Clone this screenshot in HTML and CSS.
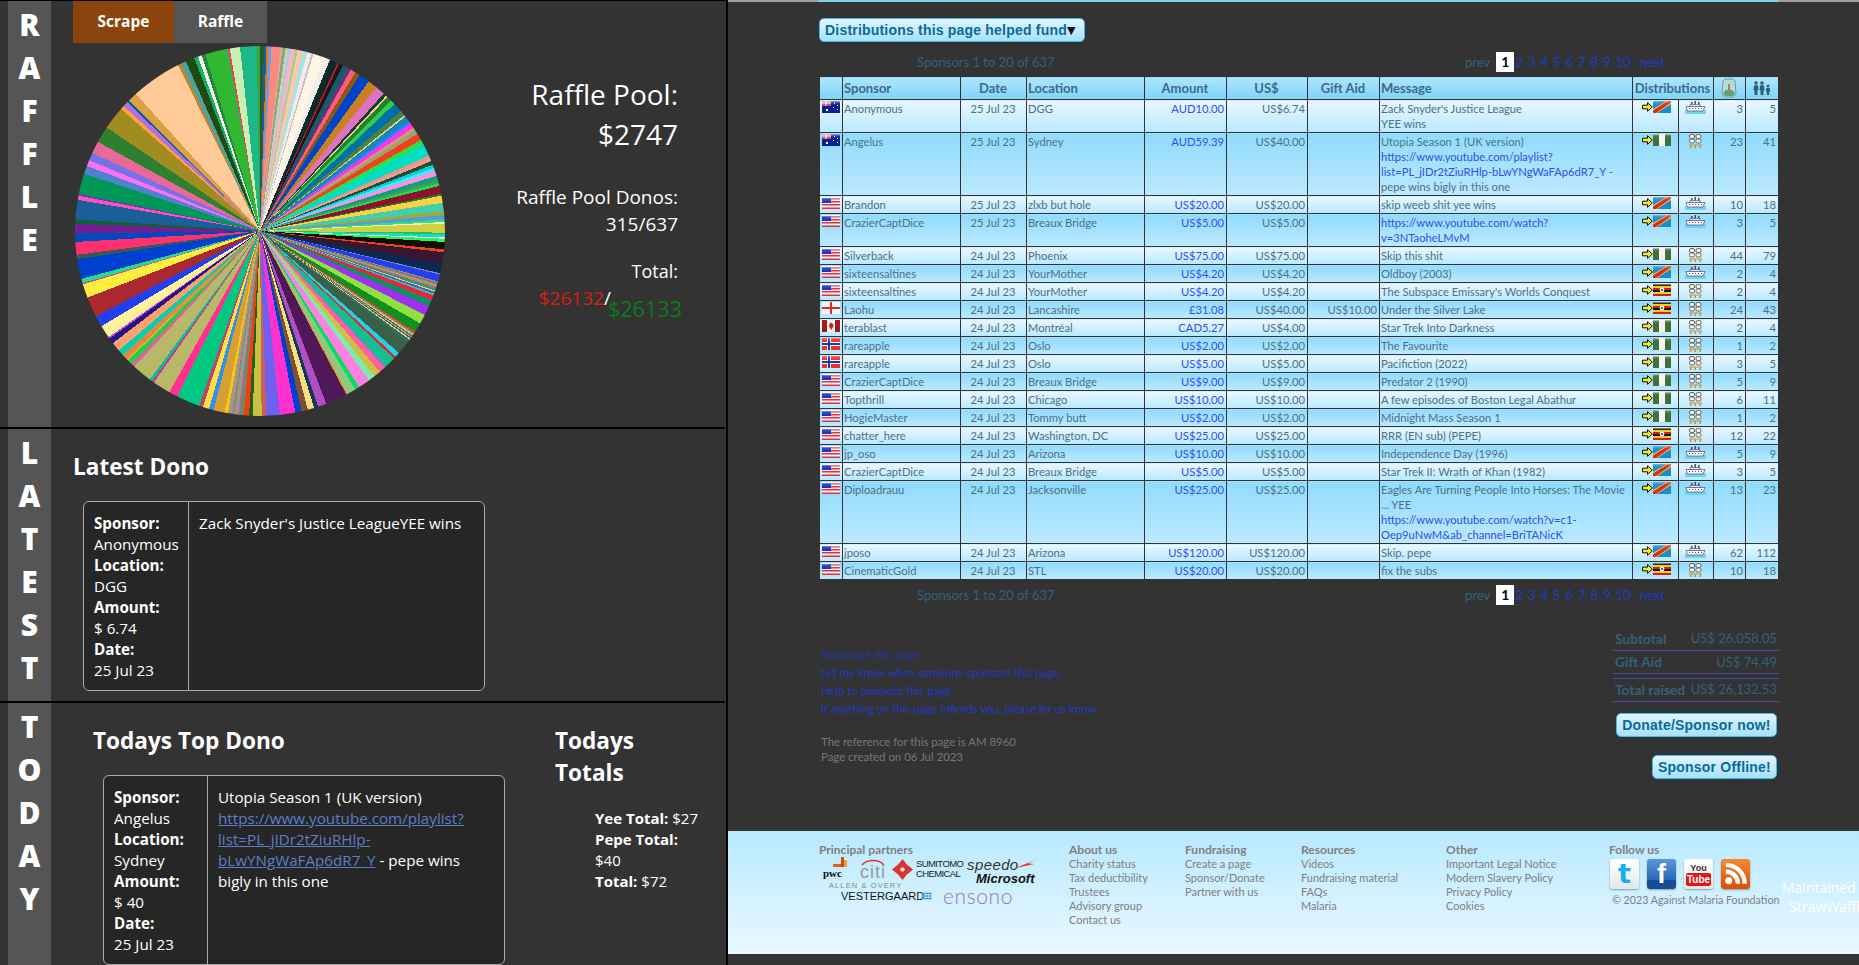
FILE: index.html
```html
<!DOCTYPE html>
<html lang="en">
<head>
<meta charset="utf-8">
<title>Raffle</title>
<link rel="stylesheet" href="styles.css">
</head>
<body>
<svg class="defs" aria-hidden="true">
  <defs>
    <linearGradient id="gloss" x1="0" y1="0" x2="0" y2="1"><stop offset="0" stop-color="#fff" stop-opacity=".65"/><stop offset=".45" stop-color="#fff" stop-opacity=".1"/><stop offset="1" stop-color="#fff" stop-opacity="0"/></linearGradient>
    <symbol id="us" viewBox="0 0 18 12"><rect width="18" height="12" fill="#f4f4f4"/><path d="M0 1h18v1.5H0zM0 4h18v1.5H0zM0 7h18v1.5H0zM0 10.5h18V12H0z" fill="#e03040"/><rect y="1" width="9" height="5" fill="#1a2fc0"/><rect width="18" height="6" fill="url(#gloss)"/></symbol>
    <symbol id="au" viewBox="0 0 18 12"><rect width="18" height="12" fill="#0a1f90"/><rect width="9" height="5" fill="#c84a70"/><path d="M0 2h9M4 0v5" stroke="#fff" stroke-width="1"/><path d="M12 2h1v1h-1zM15 4h1v1h-1zM11 6h1v1h-1zM15 8h1v1h-1zM4 8h2v2H4z" fill="#fff"/><rect width="18" height="5" fill="url(#gloss)"/></symbol>
    <symbol id="eng" viewBox="0 0 18 12"><rect width="18" height="12" fill="#f6f6f6"/><path d="M0 5h18v2H0zM8 0h2v12H8z" fill="#e02828"/></symbol>
    <symbol id="ca" viewBox="0 0 18 12"><rect width="18" height="12" fill="#f4f4f4"/><path d="M0 0h5v12H0zM13 0h5v12h-5z" fill="#a81818"/><path d="M9 2l1 2 1.500-.5-.5 2.500 1 .5-2 1.500v1.500H8.500V8l-2-1.500 1-.5-.5-2.500L8 4z" fill="#d01818"/></symbol>
    <symbol id="no" viewBox="0 0 18 12"><rect width="18" height="12" fill="#f03030"/><path d="M0 4h18v4H0zM5 0h4v12H5z" fill="#f4f4f4"/><path d="M0 5h18v2H0zM6 0h2v12H6z" fill="#1c3aa8"/><rect width="18" height="5" fill="url(#gloss)" opacity=".5"/></symbol>
    <symbol id="drc" viewBox="0 0 18 12"><rect width="18" height="12" fill="#1a8cd0"/><path d="M0 12V8L14 0h4v3L4 12z" fill="#f0d020"/><path d="M0 12V9.500L15 0h3v1.500L3 12z" fill="#e02820"/><rect width="18" height="5" fill="url(#gloss)" opacity=".6"/></symbol>
    <symbol id="ng" viewBox="0 0 18 12"><rect width="18" height="12" fill="#42703a"/><rect x="6" width="6" height="12" fill="#f4f4f0"/><rect width="18" height="4" fill="url(#gloss)"/></symbol>
    <symbol id="ug" viewBox="0 0 18 12"><rect width="18" height="12" fill="#111"/><path d="M0 2h18v2H0zM0 8h18v2H0z" fill="#f0d010"/><path d="M0 4h18v2H0zM0 10h18v2H0z" fill="#d81c1c"/><circle cx="9" cy="6" r="2.400" fill="#f4f4f4"/><circle cx="9" cy="6" r="1" fill="#333"/><rect width="18" height="3" fill="url(#gloss)"/></symbol>
    <symbol id="arrow" viewBox="0 0 11 10"><path d="M.5 3.200h5V.7L10.300 5 5.500 9.300V6.800h-5z" fill="#f4ec20" stroke="#111" stroke-width="1"/></symbol>
    <symbol id="ship" viewBox="0 0 21 13"><rect y="9" width="21" height="4" fill="#6fd4f4"/><path d="M1 5.500h19l-2 4.500H2.500z" fill="#fbfbff" stroke="#4a4a70" stroke-width=".7"/><path d="M5 3.500h10v2H5z" fill="#e8e8f4" stroke="#4a4a70" stroke-width=".6"/><path d="M6 1h1.500v2.500H6zM9.500 0H11v3.500H9.500zM13 1h1.500v2.500H13z" fill="#4a4a70"/><path d="M4 7.500h1M7 7.500h1M10 7.500h1M13 7.500h1M16 7.500h1" stroke="#4a4a70" stroke-width="1"/></symbol>
    <symbol id="pallet" viewBox="0 0 13 14"><g fill="#f2f2ea" stroke="#666660" stroke-width="1"><rect x=".5" y=".5" width="5" height="4" rx="1.500"/><rect x=".5" y="5" width="5" height="4" rx="1.500"/><rect x="7" y=".5" width="5" height="4" rx="1.500"/><rect x="7" y="5" width="5" height="4" rx="1.500"/></g><path d="M0 10.500h13v1H0z" fill="#c89030"/><path d="M1 11.500h1.500V14H1zM5.500 11.500H7V14H5.500zM10.500 11.500H12V14h-1.500z" fill="#c89030"/></symbol>
    <symbol id="jar" viewBox="0 0 16 20"><path d="M4 1h8l2 2 1 13-3 3H4l-3-3L2 3z" fill="#b8dcd4" stroke="#6f9a9c" stroke-width="1"/><path d="M2 15l3-3h6l3 3-2 3H4z" fill="#5f9f80"/><rect x="7" y="6" width="2" height="7" fill="#9a8a60"/></symbol>
    <symbol id="people" viewBox="0 0 18 14"><g fill="#2f6078"><circle cx="3" cy="2" r="1.800"/><path d="M1 4.300h4l.5 5H4.500V14h-3V9.300H.5z"/><circle cx="9" cy="2" r="1.800"/><path d="M7 4.300h4l.5 5h-1V14h-3V9.300h-1z"/><circle cx="15" cy="5" r="1.500"/><path d="M13.300 7h3.400l.5 3.500h-1V14h-2.400v-3.500h-1z"/></g></symbol>
  </defs>
</svg>

<div class="app">
  <aside class="left">
    <section class="panel panel-raffle">
      <div class="rail"><span>R</span><span>A</span><span>F</span><span>F</span><span>L</span><span>E</span></div>
      <div class="panel-body">
        <div class="tabs"><div class="tab tab-on">Scrape</div><div class="tab">Raffle</div></div>
        <div class="raffle-row">
          <div class="pie"></div>
          <div class="pool">
            <p class="pool-big">Raffle Pool:<br>$2747</p>
            <p class="pool-mid">Raffle Pool Donos:<br>315/637</p>
            <p class="pool-total">Total:</p>
            <p class="pool-money"><span class="red">$26132</span><span class="slash">/</span><span class="green">$26133</span></p>
          </div>
        </div>
      </div>
    </section>

    <section class="panel panel-latest">
      <div class="rail"><span>L</span><span>A</span><span>T</span><span>E</span><span>S</span><span>T</span></div>
      <div class="panel-body">
        <h2 class="dono-title">Latest Dono</h2>
        <div class="card">
          <div class="card-meta"><b>Sponsor:</b><br>Anonymous<br><b>Location:</b><br>DGG<br><b>Amount:</b><br>$ 6.74<br><b>Date:</b><br>25 Jul 23</div>
          <div class="card-msg">Zack Snyder's Justice LeagueYEE wins</div>
        </div>
      </div>
    </section>

    <section class="panel panel-today">
      <div class="rail"><span>T</span><span>O</span><span>D</span><span>A</span><span>Y</span></div>
      <div class="panel-body today-body">
        <div class="today-main">
          <h2 class="dono-title">Todays Top Dono</h2>
          <div class="card">
            <div class="card-meta"><b>Sponsor:</b><br>Angelus<br><b>Location:</b><br>Sydney<br><b>Amount:</b><br>$ 40<br><b>Date:</b><br>25 Jul 23</div>
            <div class="card-msg">Utopia Season 1 (UK version)<br><a href="#">https://www.youtube.com/playlist?list=PL_jIDr2tZiuRHlp-bLwYNgWaFAp6dR7_Y</a> - pepe wins bigly in this one</div>
          </div>
        </div>
        <div class="today-side">
          <h2 class="side-title">Todays Totals</h2>
          <div class="side-list"><b>Yee Total:</b> $27<br><b>Pepe Total:</b><br>$40<br><b>Total:</b> $72</div>
        </div>
      </div>
    </section>
  </aside>

  <main class="right">
    <div class="top-rule"></div>
    <div class="content">
      <div class="btn btn-drop">Distributions this page helped fund<span class="caret">▼</span></div>
      <div class="pager pager-top">
        <span class="pager-count">Sponsors 1 to 20 of 637</span>
        <span class="pager-links"><span class="prev">prev</span><span class="cur">1</span><a href="#">2</a><a href="#">3</a><a href="#">4</a><a href="#">5</a><a href="#">6</a><a href="#">7</a><a href="#">8</a><a href="#">9</a><a href="#">10</a><a href="#" class="next">next</a></span>
      </div>

      <table class="spons">
        <colgroup><col class="c1"><col class="c2"><col class="c3"><col class="c4"><col class="c5"><col class="c6"><col class="c7"><col class="c8"><col class="c9"><col class="c10"><col class="c11"><col class="c12"></colgroup>
        <thead>
          <tr><th></th><th class="l">Sponsor</th><th>Date</th><th class="l">Location</th><th>Amount</th><th>US$</th><th>Gift Aid</th><th class="l">Message</th><th colspan="2">Distributions</th><th><svg class="ic-jar"><use href="#jar"/></svg></th><th><svg class="ic-people"><use href="#people"/></svg></th></tr>
        </thead>
        <tbody>
          <tr><td><svg class="fl"><use href="#au"/></svg></td><td>Anonymous</td><td class="c">25 Jul 23</td><td>DGG</td><td class="r amt">AUD10.00</td><td class="r">US$6.74</td><td class="r"></td><td>Zack Snyder's Justice League<br>YEE wins</td><td class="dist"><svg class="ar"><use href="#arrow"/></svg><svg class="fl"><use href="#drc"/></svg></td><td class="c"><svg class="ship"><use href="#ship"/></svg></td><td class="r">3</td><td class="r">5</td></tr>
          <tr><td><svg class="fl"><use href="#au"/></svg></td><td>Angelus</td><td class="c">25 Jul 23</td><td>Sydney</td><td class="r amt">AUD59.39</td><td class="r">US$40.00</td><td class="r"></td><td>Utopia Season 1 (UK version)<br><a href="#">https://www.youtube.com/playlist?<br>list=PL_jIDr2tZiuRHlp-bLwYNgWaFAp6dR7_Y</a> -<br>pepe wins bigly in this one</td><td class="dist"><svg class="ar"><use href="#arrow"/></svg><svg class="fl"><use href="#ng"/></svg></td><td class="c"><svg class="pal"><use href="#pallet"/></svg></td><td class="r">23</td><td class="r">41</td></tr>
          <tr><td><svg class="fl"><use href="#us"/></svg></td><td>Brandon</td><td class="c">25 Jul 23</td><td>zlxb but hole</td><td class="r amt">US$20.00</td><td class="r">US$20.00</td><td class="r"></td><td>skip weeb shit yee wins</td><td class="dist"><svg class="ar"><use href="#arrow"/></svg><svg class="fl"><use href="#drc"/></svg></td><td class="c"><svg class="ship"><use href="#ship"/></svg></td><td class="r">10</td><td class="r">18</td></tr>
          <tr><td><svg class="fl"><use href="#us"/></svg></td><td>CrazierCaptDice</td><td class="c">25 Jul 23</td><td>Breaux Bridge</td><td class="r amt">US$5.00</td><td class="r">US$5.00</td><td class="r"></td><td><a href="#">https://www.youtube.com/watch?<br>v=3NTaoheLMvM</a></td><td class="dist"><svg class="ar"><use href="#arrow"/></svg><svg class="fl"><use href="#drc"/></svg></td><td class="c"><svg class="ship"><use href="#ship"/></svg></td><td class="r">3</td><td class="r">5</td></tr>
          <tr><td><svg class="fl"><use href="#us"/></svg></td><td>Silverback</td><td class="c">24 Jul 23</td><td>Phoenix</td><td class="r amt">US$75.00</td><td class="r">US$75.00</td><td class="r"></td><td>Skip this shit</td><td class="dist"><svg class="ar"><use href="#arrow"/></svg><svg class="fl"><use href="#ng"/></svg></td><td class="c"><svg class="pal"><use href="#pallet"/></svg></td><td class="r">44</td><td class="r">79</td></tr>
          <tr><td><svg class="fl"><use href="#us"/></svg></td><td>sixteensaltines</td><td class="c">24 Jul 23</td><td>YourMother</td><td class="r amt">US$4.20</td><td class="r">US$4.20</td><td class="r"></td><td>Oldboy (2003)</td><td class="dist"><svg class="ar"><use href="#arrow"/></svg><svg class="fl"><use href="#drc"/></svg></td><td class="c"><svg class="ship"><use href="#ship"/></svg></td><td class="r">2</td><td class="r">4</td></tr>
          <tr><td><svg class="fl"><use href="#us"/></svg></td><td>sixteensaltines</td><td class="c">24 Jul 23</td><td>YourMother</td><td class="r amt">US$4.20</td><td class="r">US$4.20</td><td class="r"></td><td>The Subspace Emissary's Worlds Conquest</td><td class="dist"><svg class="ar"><use href="#arrow"/></svg><svg class="fl"><use href="#ug"/></svg></td><td class="c"><svg class="pal"><use href="#pallet"/></svg></td><td class="r">2</td><td class="r">4</td></tr>
          <tr><td><svg class="fl"><use href="#eng"/></svg></td><td>Laohu</td><td class="c">24 Jul 23</td><td>Lancashire</td><td class="r amt">£31.08</td><td class="r">US$40.00</td><td class="r">US$10.00</td><td>Under the Silver Lake</td><td class="dist"><svg class="ar"><use href="#arrow"/></svg><svg class="fl"><use href="#ug"/></svg></td><td class="c"><svg class="pal"><use href="#pallet"/></svg></td><td class="r">24</td><td class="r">43</td></tr>
          <tr><td><svg class="fl"><use href="#ca"/></svg></td><td>terablast</td><td class="c">24 Jul 23</td><td>Montréal</td><td class="r amt">CAD5.27</td><td class="r">US$4.00</td><td class="r"></td><td>Star Trek Into Darkness</td><td class="dist"><svg class="ar"><use href="#arrow"/></svg><svg class="fl"><use href="#ng"/></svg></td><td class="c"><svg class="pal"><use href="#pallet"/></svg></td><td class="r">2</td><td class="r">4</td></tr>
          <tr><td><svg class="fl"><use href="#no"/></svg></td><td>rareapple</td><td class="c">24 Jul 23</td><td>Oslo</td><td class="r amt">US$2.00</td><td class="r">US$2.00</td><td class="r"></td><td>The Favourite</td><td class="dist"><svg class="ar"><use href="#arrow"/></svg><svg class="fl"><use href="#ng"/></svg></td><td class="c"><svg class="pal"><use href="#pallet"/></svg></td><td class="r">1</td><td class="r">2</td></tr>
          <tr><td><svg class="fl"><use href="#no"/></svg></td><td>rareapple</td><td class="c">24 Jul 23</td><td>Oslo</td><td class="r amt">US$5.00</td><td class="r">US$5.00</td><td class="r"></td><td>Pacifiction (2022)</td><td class="dist"><svg class="ar"><use href="#arrow"/></svg><svg class="fl"><use href="#ng"/></svg></td><td class="c"><svg class="pal"><use href="#pallet"/></svg></td><td class="r">3</td><td class="r">5</td></tr>
          <tr><td><svg class="fl"><use href="#us"/></svg></td><td>CrazierCaptDice</td><td class="c">24 Jul 23</td><td>Breaux Bridge</td><td class="r amt">US$9.00</td><td class="r">US$9.00</td><td class="r"></td><td>Predator 2 (1990)</td><td class="dist"><svg class="ar"><use href="#arrow"/></svg><svg class="fl"><use href="#ng"/></svg></td><td class="c"><svg class="pal"><use href="#pallet"/></svg></td><td class="r">5</td><td class="r">9</td></tr>
          <tr><td><svg class="fl"><use href="#us"/></svg></td><td>Topthrill</td><td class="c">24 Jul 23</td><td>Chicago</td><td class="r amt">US$10.00</td><td class="r">US$10.00</td><td class="r"></td><td>A few episodes of Boston Legal Abathur</td><td class="dist"><svg class="ar"><use href="#arrow"/></svg><svg class="fl"><use href="#ng"/></svg></td><td class="c"><svg class="pal"><use href="#pallet"/></svg></td><td class="r">6</td><td class="r">11</td></tr>
          <tr><td><svg class="fl"><use href="#us"/></svg></td><td>HogieMaster</td><td class="c">24 Jul 23</td><td>Tommy butt</td><td class="r amt">US$2.00</td><td class="r">US$2.00</td><td class="r"></td><td>Midnight Mass Season 1</td><td class="dist"><svg class="ar"><use href="#arrow"/></svg><svg class="fl"><use href="#ng"/></svg></td><td class="c"><svg class="pal"><use href="#pallet"/></svg></td><td class="r">1</td><td class="r">2</td></tr>
          <tr><td><svg class="fl"><use href="#us"/></svg></td><td>chatter_here</td><td class="c">24 Jul 23</td><td>Washington, DC</td><td class="r amt">US$25.00</td><td class="r">US$25.00</td><td class="r"></td><td>RRR (EN sub) (PEPE)</td><td class="dist"><svg class="ar"><use href="#arrow"/></svg><svg class="fl"><use href="#ug"/></svg></td><td class="c"><svg class="pal"><use href="#pallet"/></svg></td><td class="r">12</td><td class="r">22</td></tr>
          <tr><td><svg class="fl"><use href="#us"/></svg></td><td>jp_oso</td><td class="c">24 Jul 23</td><td>Arizona</td><td class="r amt">US$10.00</td><td class="r">US$10.00</td><td class="r"></td><td>Independence Day (1996)</td><td class="dist"><svg class="ar"><use href="#arrow"/></svg><svg class="fl"><use href="#drc"/></svg></td><td class="c"><svg class="ship"><use href="#ship"/></svg></td><td class="r">5</td><td class="r">9</td></tr>
          <tr><td><svg class="fl"><use href="#us"/></svg></td><td>CrazierCaptDice</td><td class="c">24 Jul 23</td><td>Breaux Bridge</td><td class="r amt">US$5.00</td><td class="r">US$5.00</td><td class="r"></td><td>Star Trek II: Wrath of Khan (1982)</td><td class="dist"><svg class="ar"><use href="#arrow"/></svg><svg class="fl"><use href="#drc"/></svg></td><td class="c"><svg class="ship"><use href="#ship"/></svg></td><td class="r">3</td><td class="r">5</td></tr>
          <tr><td><svg class="fl"><use href="#us"/></svg></td><td>Diploadrauu</td><td class="c">24 Jul 23</td><td>Jacksonville</td><td class="r amt">US$25.00</td><td class="r">US$25.00</td><td class="r"></td><td>Eagles Are Turning People Into Horses: The Movie<br>... YEE<br><a href="#">https://www.youtube.com/watch?v=c1-<br>Oep9uNwM&amp;ab_channel=BriTANicK</a></td><td class="dist"><svg class="ar"><use href="#arrow"/></svg><svg class="fl"><use href="#drc"/></svg></td><td class="c"><svg class="ship"><use href="#ship"/></svg></td><td class="r">13</td><td class="r">23</td></tr>
          <tr><td><svg class="fl"><use href="#us"/></svg></td><td>jposo</td><td class="c">24 Jul 23</td><td>Arizona</td><td class="r amt">US$120.00</td><td class="r">US$120.00</td><td class="r"></td><td>Skip. pepe</td><td class="dist"><svg class="ar"><use href="#arrow"/></svg><svg class="fl"><use href="#drc"/></svg></td><td class="c"><svg class="ship"><use href="#ship"/></svg></td><td class="r">62</td><td class="r">112</td></tr>
          <tr><td><svg class="fl"><use href="#us"/></svg></td><td>CinematicGold</td><td class="c">24 Jul 23</td><td>STL</td><td class="r amt">US$20.00</td><td class="r">US$20.00</td><td class="r"></td><td>fix the subs</td><td class="dist"><svg class="ar"><use href="#arrow"/></svg><svg class="fl"><use href="#ug"/></svg></td><td class="c"><svg class="pal"><use href="#pallet"/></svg></td><td class="r">10</td><td class="r">18</td></tr>
        </tbody>
      </table>

      <div class="pager pager-bottom">
        <span class="pager-count">Sponsors 1 to 20 of 637</span>
        <span class="pager-links"><span class="prev">prev</span><span class="cur">1</span><a href="#">2</a><a href="#">3</a><a href="#">4</a><a href="#">5</a><a href="#">6</a><a href="#">7</a><a href="#">8</a><a href="#">9</a><a href="#">10</a><a href="#" class="next">next</a></span>
      </div>

      <div class="lower">
        <div class="lower-left">
          <a href="#" class="dim">Bookmark this page</a>
          <a href="#">Let me know when someone sponsors this page</a>
          <a href="#">Help to promote this page</a>
          <a href="#">If anything on this page offends you, please let us know</a>
          <p class="ref">The reference for this page is AM 8960<br>Page created on 06 Jul 2023</p>
        </div>
        <div class="lower-right">
          <div class="sum"><b>Subtotal</b><span>US$ 26,058.05</span></div>
          <div class="sum sum-gift"><b>Gift Aid</b><span>US$ 74.49</span></div>
          <div class="sum sum-total"><b>Total raised</b><span>US$ 26,132.53</span></div>
          <div class="btn btn-donate">Donate/Sponsor now!</div>
          <div class="btn btn-offline">Sponsor Offline!</div>
        </div>
      </div>
    </div>

    <footer class="foot">
      <div class="foot-col">
        <h4>Principal partners</h4>
        <div class="logos">
          <svg class="lg-pwc-mark" viewBox="0 0 14 10"><path d="M8 0h3v10H8z" fill="#d04a10"/><path d="M11 3h3v7h-3z" fill="#f0a030"/><path d="M0 7h8v3H0z" fill="#e06020"/></svg>
          <span class="lg lg-pwc">pwc</span>
          <svg class="lg-citi-arc" viewBox="0 0 24 8"><path d="M1 7C6 1 18 1 23 7" fill="none" stroke="#e0342c" stroke-width="1.600"/></svg>
          <span class="lg lg-citi">citi</span>
          <svg class="lg-sumi-mark" viewBox="0 0 20 20"><path d="M10 0l4 5 6 5-6 5-4 5-4-5-6-5 6-5z" fill="#d8382c"/><circle cx="10" cy="10" r="2" fill="#fff"/></svg>
          <span class="lg lg-sumi">SUMITOMO<br>CHEMICAL</span>
          <span class="lg lg-speedo">speedo</span>
          <svg class="lg-speedo-mark" viewBox="0 0 24 10"><path d="M0 9.500L24 0 14 4.500l6 .5z" fill="#e8341c"/></svg>
          <span class="lg lg-ms">Microsoft</span>
          <span class="lg lg-ao">ALLEN &amp; OVERY</span>
          <span class="lg lg-vest">VESTERGAARD</span>
          <svg class="lg-vest-mark" viewBox="0 0 10 8"><path d="M0 1.500h10M0 4h10M0 6.500h10M2 0v8M5 0v8M8 0v8" stroke="#4aa0e0" stroke-width="1"/></svg>
          <span class="lg lg-ens">ensono</span>
        </div>
      </div>
      <div class="foot-col"><h4>About us</h4>Charity status<br>Tax deductibility<br>Trustees<br>Advisory group<br>Contact us</div>
      <div class="foot-col"><h4>Fundraising</h4>Create a page<br>Sponsor/Donate<br>Partner with us</div>
      <div class="foot-col"><h4>Resources</h4>Videos<br>Fundraising material<br>FAQs<br>Malaria</div>
      <div class="foot-col"><h4>Other</h4>Important Legal Notice<br>Modern Slavery Policy<br>Privacy Policy<br>Cookies</div>
      <div class="foot-col">
        <h4>Follow us</h4>
        <div class="social">
          <span class="soc soc-tw">t</span>
          <span class="soc soc-fb">f</span>
          <span class="soc soc-yt"><span class="yt-you">You</span><span class="yt-tube">Tube</span></span>
          <span class="soc soc-rss"><svg viewBox="0 0 30 30"><circle cx="8" cy="22" r="3.600" fill="#fff"/><path d="M5 12.500A12.500 12.500 0 0 1 17.500 25M5 5.500A19.500 19.500 0 0 1 24.500 25" fill="none" stroke="#fff" stroke-width="4.400"/></svg></span>
        </div>
        <div class="copy">© 2023 Against Malaria Foundation</div>
      </div>
      <div class="maint">Maintained by<br>StrawWaffle</div>
    </footer>
  </main>
</div>
</body>
</html>
```
FILE: styles.css
```css
* { box-sizing: border-box; }
html, body { margin: 0; height: 100%; background: #333; overflow: hidden; }
.defs { position: absolute; width: 0; height: 0; }
a { color: inherit; }

.app { display: flex; width: 1859px; height: 965px; }

/* Left column */
.left { flex: 0 0 728px; height: 965px; border-right: 2px solid #000; border-top: 1px solid #000; padding-right: 1px; font-family: "Open Sans", "Noto Sans", sans-serif; color: #fff; font-size: 15.200px; line-height: 21px; overflow: hidden; }
.panel { display: flex; padding-left: 8px; }
.panel-raffle { height: 428px; border-bottom: 2px solid #000; }
.panel-latest { height: 274px; border-bottom: 2px solid #000; }
.panel-today { height: 262px; }
.rail { flex: 0 0 43px; background: #555; display: flex; flex-direction: column; align-items: center; padding-top: 2px; font-weight: 800; font-size: 30px; line-height: 43px; }
.panel-body { flex: 1; min-width: 0; padding-left: 22px; }

.tabs { display: flex; height: 42px; }
.tab { display: flex; align-items: center; justify-content: center; width: 93px; padding-bottom: 2px; background: #555; font-weight: 700; font-size: 15.500px; }
.tab-on { width: 101px; background: #8b450c; }
.raffle-row { display: flex; width: 605px; padding-top: 3px; padding-left: 2px; }
.pie { flex: 0 0 370px; height: 370px; border-radius: 50%;
  background: conic-gradient(
    #1d5e2a 0deg 1.2deg, #1060a0 1.2deg 2deg, #f07010 2deg 2.6deg, #70a0d8 2.6deg 3.6deg, #fa8a7e 3.6deg 6.4deg, #e8a0a0 6.4deg 7deg, #7cb07c 7deg 8deg, #f0d080 8deg 8.6deg, #a8c8f8 8.6deg 9.5deg, #f4b8b8 9.5deg 11deg, #a0d0a0 11deg 11.8deg, #ffc8a0 11.8deg 13.4deg, #a8e0e8 13.4deg 14.8deg, #f8e8e8 14.8deg 16.2deg, #c0c0c0 16.2deg 16.8deg, #fff6e6 16.8deg 20.2deg, #f0f0e8 20.2deg 22.2deg,
    #0c2a2c 22.2deg 24.7deg, #b02030 24.7deg 25.3deg, #2a1010 25.3deg 26.6deg, #086068 26.6deg 28deg, #5a3a70 28deg 29.4deg, #ff5a80 29.4deg 31deg, #8a5a10 31deg 32.6deg, #0044cc 32.6deg 36deg, #c88020 36deg 39deg, #e070c0 39deg 42deg, #104030 42deg 43deg, #ffd070 43deg 43.6deg, #208040 43.6deg 45deg, #30d040 45deg 46.6deg, #0070a8 46.6deg 49.6deg, #508040 49.6deg 51.3deg, #c8e890 51.3deg 51.8deg, #2080c0 51.8deg 53.6deg, #1090f0 53.6deg 54.4deg, #ff30f0 54.4deg 56deg, #c8a070 56deg 57deg, #a0a070 57deg 58.3deg, #f04020 58.3deg 60.5deg, #30e040 60.5deg 62deg, #00e0c0 62deg 65.9deg, #f09090 65.9deg 66.8deg, #e8a090 66.8deg 67.8deg, #205030 67.8deg 69deg, #10c8e0 69deg 70deg, #30f0f0 70deg 71deg, #ff90e0 71deg 72.6deg, #10a080 72.6deg 74deg, #40a060 74deg 75deg, #20e040 75deg 75.9deg,
    #901030 75.9deg 78.4deg, #208030 78.4deg 79deg, #ffd040 79deg 81.2deg, #40d0b0 81.2deg 83.8deg, #a0a840 83.8deg 85deg, #50a0d0 85deg 86.4deg, #30e080 86.4deg 87.2deg, #f0f0c0 87.2deg 87.7deg, #d0d040 87.7deg 90.5deg, #20c060 90.5deg 91deg, #10e0c0 91deg 92deg, #f0f0f0 92deg 92.4deg, #30f060 92.4deg 93.4deg, #101000 93.4deg 95.7deg, #f04020 95.7deg 96.6deg, #3a1530 96.6deg 100.2deg, #0c2a50 100.2deg 103.2deg, #8080e0 103.2deg 103.6deg, #2040f0 103.6deg 105.8deg,
    #d08040 105.8deg 106.2deg, #3080d0 106.2deg 106.6deg, #a09060 106.6deg 107deg, #f08040 107deg 107.4deg, #60a0d0 107.4deg 107.8deg, #c06040 107.8deg 108.2deg, #20a060 108.2deg 108.8deg, #f0c080 108.8deg 109.2deg, #4060d0 109.2deg 109.8deg, #40c0a0 109.8deg 110.4deg, #f02040 110.4deg 111.9deg, #109060 111.9deg 114deg, #a030f0 114deg 117deg, #90e040 117deg 120deg, #109020 120deg 123deg, #f04020 123deg 123.6deg, #80a0a0 123.6deg 124deg, #f0c080 124deg 124.4deg, #208060 124.4deg 124.8deg, #d0a060 124.8deg 125.2deg, #406060 125.2deg 125.6deg, #f0d090 125.6deg 126deg, #307060 126deg 127deg, #3a6048 127deg 131.3deg, #20d0f0 131.3deg 132.8deg, #f02020 132.8deg 133.6deg, #10c090 133.6deg 137deg, #8080c0 137deg 137.6deg, #ff60a0 137.6deg 139.6deg, #d0c040 139.6deg 141.8deg, #80e8b0 141.8deg 143.9deg, #ff80e0 143.9deg 147.6deg, #00e060 147.6deg 149deg, #90c880 149deg 151.8deg, #f08020 151.8deg 152.2deg, #501858 152.2deg 159deg, #b050c0 159deg 161.7deg, #103858 161.7deg 163deg, #f8e080 163deg 165deg, #805030 165deg 167deg, #0040d0 167deg 169deg, #ff30d0 169deg 173.8deg, #7060f0 173.8deg 178deg, #c86060 178deg 179.5deg,
    #c8c040 179.5deg 182.3deg, #206020 182.3deg 183.4deg, #f04010 183.4deg 185deg, #a07060 185deg 185.6deg, #40a060 185.6deg 186.2deg, #d06080 186.2deg 186.8deg, #80a0c0 186.8deg 187.4deg, #c09050 187.4deg 188deg, #50a090 188deg 188.6deg, #e070a0 188.6deg 189.2deg, #90b060 189.2deg 190deg, #ffc020 190deg 191deg, #d8a030 191deg 194.5deg, #3090f0 194.5deg 196deg, #ffe040 196deg 198deg, #c04070 198deg 199.2deg, #00c880 199.2deg 206.6deg, #ff3090 206.6deg 209.4deg, #b8b868 209.4deg 215deg, #f02080 215deg 215.6deg, #00c0a0 215.6deg 216.6deg, #b8b868 216.6deg 222.8deg, #e060a0 222.8deg 224deg, #20d040 224deg 225.5deg, #c0c060 225.5deg 226deg, #ff8030 226deg 227.2deg, #a0a060 227.2deg 228deg, #00d0b0 228deg 229.8deg, #ffa070 229.8deg 232.7deg, #201880 232.7deg 234.5deg, #d040f0 234.5deg 235deg, #fff09a 235deg 239deg, #2040f0 239deg 242.5deg, #aa2830 242.5deg 248.9deg, #ffee40 248.9deg 253.2deg, #e040a0 253.2deg 253.6deg, #20e090 253.6deg 255deg, #0040d0 255deg 261.2deg, #3a5a50 261.2deg 262.6deg, #ff3070 262.6deg 266.6deg, #0048c0 266.6deg 269.2deg,
    #702090 269.2deg 272.3deg, #106030 272.3deg 273.6deg, #1a5f98 273.6deg 279.7deg, #ff50c0 279.7deg 281deg, #6040a0 281deg 281.6deg, #009858 281.6deg 288deg, #5080d0 288deg 290.6deg, #ff70f0 290.6deg 292.5deg, #7870e8 292.5deg 295deg, #e86898 295deg 298.8deg, #2e8030 298.8deg 304deg, #a08c20 304deg 311.3deg, #ffa040 311.3deg 312.5deg, #b070e0 312.5deg 314.2deg, #0060a0 314.2deg 315deg, #dca040 315deg 317.8deg, #ffcc99 317.8deg 333.7deg, #d08020 333.7deg 334.6deg, #50a0a0 334.6deg 336.4deg, #204a10 336.4deg 339.2deg, #10b070 339.2deg 340.4deg, #fff8e0 340.4deg 341.6deg, #208840 341.6deg 342.8deg, #30b830 342.8deg 349.6deg, #40a090 349.6deg 350deg, #f04040 350deg 350.6deg, #c8f0b0 350.6deg 353.8deg, #1cb888 353.8deg 359deg, #40a040 359deg 360deg
  );
}
.pool { margin-left: auto; padding-top: 28px; text-align: right; }
.pool p { margin: 0; }
.pool-big { font-size: 28px; line-height: 40px; }
.pool .pool-mid { margin-top: 30px; font-size: 19px; line-height: 27px; }
.pool .pool-total { margin-top: 20px; font-size: 18px; line-height: 27px; }
.pool .pool-money { height: 30px; margin-right: -4px; white-space: nowrap; line-height: 24px; }
.red { color: #d81e10; font-size: 19px; }
.slash { font-size: 19px; }
.green { color: #0b7a1f; font-size: 21.600px; position: relative; top: 12px; margin-left: -3px; }

.dono-title { margin: 0; padding-top: 23px; font-size: 22.600px; line-height: 30px; font-weight: 700; }
.card { display: flex; width: 402px; height: 190px; margin: 19px 0 0 10px; border: 1px solid #aaa; border-radius: 6px; background: #262626; overflow: hidden; }
.card-meta { flex: 0 0 105px; padding: 11px 0 0 10px; border-right: 1px solid #aaa; }
.card-msg { flex: 1; padding: 11px 10px 0 10px; overflow-wrap: anywhere; }
.card-msg a { color: #5b7fc7; }
.today-body { display: flex; padding-left: 42px; }
.today-main { flex: 0 0 462px; }
.today-main .card-meta { flex-basis: 104px; }
.today-side { flex: 0 0 150px; }
.side-title { margin: 0; padding-top: 22px; font-size: 22.600px; line-height: 32px; font-weight: 700; width: 100px; }
.side-list { margin: 19px 0 0 40px; width: 106px; font-size: 15px; }

/* Right column */
.right { flex: 1; min-width: 0; height: 965px; overflow: hidden; font-family: Lato, "Open Sans", sans-serif; }
.top-rule { height: 2px; background: linear-gradient(90deg, #a0a0a0 91px, #7fcfee 91px, #7fcfee 1051px, #a0a0a0 1051px); }
.content { width: 960px; height: 829px; margin-left: 91px; padding-top: 16px; }
.btn { display: inline-block; height: 24px; border: 1px solid #3dbbec; border-radius: 5px; background: linear-gradient(#e2f5ff, #a6e1fb); color: #0b6a98; font-family: "Liberation Sans", Arial, sans-serif; font-weight: 700; font-size: 14px; line-height: 22px; letter-spacing: .2px; padding: 0 5px; white-space: nowrap; }
.btn-drop { display: block; width: 266px; }
.caret { color: #111; font-family: "DejaVu Sans", sans-serif; font-size: 11px; line-height: 14px; vertical-align: 1px; letter-spacing: 0; }
.pager { display: flex; height: 20px; align-items: center; font-size: 13px; color: #35607a; }
.pager-top { margin-top: 10px; }
.pager-bottom { margin-top: 5px; }
.pager-count { margin-left: 98px; width: 548px; }
.pager-links { display: flex; align-items: center; }
.pager-links a { color: #2238c8; text-decoration: none; margin-right: 5px; }
.pager-links .next { margin-left: 4px; margin-right: 0; }
.prev { margin-right: 6px; }
.cur { width: 18px; height: 20px; margin-right: 1px; background: #fff; color: #000; font-weight: 700; text-align: center; line-height: 20px; font-size: 14px; }

.spons { width: 959px; margin: 4px 0 0; table-layout: fixed; border-collapse: collapse; font-size: 11.200px; line-height: 15px; color: #4c7186; }
.spons th, .spons td { border: 1px solid #333; padding: 1px 2px 1px 1px; vertical-align: top; overflow: hidden; white-space: nowrap; }
.spons th { height: 23px; padding-top: 0; padding-bottom: 0; background: linear-gradient(#ade6ff, #80d3f9); font-size: 13px; text-align: center; color: #3d6c88; vertical-align: middle; }
.spons th.l { text-align: left; }
.spons tbody tr:nth-child(odd) td { background: linear-gradient(#e9f8ff, #b9e8ff); }
.spons tbody tr:nth-child(even) td { background: linear-gradient(#90dbfd, #bce9ff); }
.spons .c { text-align: center; }
.spons .r { text-align: right; }
.spons .amt { color: #3050f0; }
.spons a { color: #3050e8; text-decoration: none; }
.c1 { width: 23px; } .c2 { width: 118px; } .c3 { width: 66px; } .c4 { width: 118px; } .c5 { width: 82px; } .c6 { width: 81px; } .c7 { width: 72px; } .c8 { width: 253px; } .c9 { width: 46px; } .c10 { width: 35px; } .c11 { width: 32px; } .c12 { width: 33px; }
.fl { display: block; width: 18px; height: 12px; margin-left: 1px; }
.dist { white-space: nowrap; }
.dist .ar { width: 11px; height: 10px; display: inline-block; vertical-align: top; margin: 1px 0 0 8px; }
.dist .fl { display: inline-block; vertical-align: top; margin-left: 0; }
.ship { display: block; width: 21px; height: 13px; margin: 0 auto; }
.pal { display: block; width: 13px; height: 14px; margin: 0 auto; }
.ic-jar { width: 16px; height: 20px; display: block; margin: 0 auto; }
.ic-people { width: 18px; height: 14px; display: block; margin: 0 auto; }

.lower { display: flex; justify-content: space-between; font-size: 11.400px; }
.lower-left { padding: 41px 0 0 2px; line-height: 18px; color: #2238c8; }
.lower-left a { display: block; text-decoration: none; }
.lower-left .dim { color: #26349a; }
.ref { margin: 16px 0 0; color: #777; line-height: 15px; }
.lower-right { width: 166px; padding-top: 22px; display: flex; flex-direction: column; align-items: flex-end; }
.sum { display: flex; justify-content: space-between; width: 166px; height: 24px; padding: 0 2px; border-bottom: 1px solid #4a48a8; color: #35607a; font-size: 13px; line-height: 23px; }
.sum b { font-size: 13.800px; }
.sum-gift { height: 23px; line-height: 22px; }
.sum-total { margin-top: 4px; border-top: 1px solid #4a48a8; line-height: 21px; }
.btn-donate { margin: 11px 2px 0 0; width: 161px; text-align: center; padding: 0; }
.btn-offline { margin: 18px 2px 0 0; width: 125px; text-align: center; padding: 0; }

/* Footer */
.foot { display: grid; grid-template-columns: 250px 116px 116px 145px 163px 173px 93px; height: 123px; padding: 12px 0 0 91px; background: linear-gradient(#b8e9ff, #eaf8ff); color: #808080; font-size: 11px; line-height: 14px; white-space: nowrap; }
.foot h4 { margin: 0; font-size: 12px; line-height: 14px; font-weight: 700; }
.logos { position: relative; height: 60px; }
.lg { position: absolute; white-space: nowrap; font-family: "Liberation Sans", sans-serif; }
.lg-pwc-mark { position: absolute; left: 14px; top: 0; width: 14px; height: 10px; }
.lg-pwc { left: 4px; top: 9px; font: 700 11px/14px "Liberation Serif", serif; color: #111; }
.lg-citi-arc { position: absolute; left: 42px; top: 1px; width: 24px; height: 8px; }
.lg-citi { left: 41px; top: 6px; font-size: 18px; line-height: 18px; color: #9a9a9a; letter-spacing: 1px; }
.lg-sumi-mark { position: absolute; left: 73px; top: 2px; width: 21px; height: 21px; }
.lg-sumi { left: 97px; top: 2px; font-size: 9.500px; line-height: 10px; color: #222; letter-spacing: -.6px; }
.lg-speedo { left: 148px; top: 0; font-size: 15px; font-style: italic; line-height: 16px; color: #333; letter-spacing: .4px; }
.lg-speedo-mark { position: absolute; left: 195px; top: 2px; width: 24px; height: 10px; }
.lg-ms { left: 157px; top: 15px; font-size: 13px; font-weight: 700; font-style: italic; color: #111; line-height: 14px; }
.lg-ao { left: 10px; top: 23px; font-size: 7.500px; letter-spacing: 1.100px; color: #888; line-height: 12px; }
.lg-vest { left: 22px; top: 32px; font-size: 11px; line-height: 14px; color: #111; }
.lg-vest-mark { position: absolute; left: 103px; top: 35px; width: 10px; height: 8px; }
.lg-ens { left: 124px; top: 29px; font-family: Lato, sans-serif; font-weight: 300; font-size: 21px; line-height: 20px; color: #9a78b0; letter-spacing: .6px; }
.social { display: flex; gap: 8px; margin: 2px 0 0 1px; }
.soc { display: flex; align-items: center; justify-content: center; flex: 0 0 29px; width: 29px; height: 30px; border-radius: 3px; overflow: hidden; font-family: "Liberation Sans", sans-serif; font-weight: 700; box-shadow: 0 1px 2px rgba(0,0,0,.35); }
.soc-tw { background: linear-gradient(#fff, #dfe9ee); color: #18b0e8; font-family: "DejaVu Sans", sans-serif; font-size: 27px; line-height: 30px; }
.soc-fb { background: linear-gradient(#5b95d8 0%, #2a68b4 70%, #134c94 72%, #1a4f90 100%); color: #fff; font-size: 27px; line-height: 30px; }
.soc-yt { flex-direction: column; background: linear-gradient(#fff, #e4e4e4); font-size: 9px; line-height: 10px; color: #333; }
.yt-tube { background: #e01818; color: #fff; border-radius: 2px; padding: 0 1px; font-size: 10px; line-height: 13px; }
.soc-rss { background: linear-gradient(#f58a30, #d9500a); }
.soc-rss svg { width: 100%; height: 100%; display: block; }
.copy { margin: 4px 0 0 3px; font-size: 10.700px; }
.maint { padding-top: 35px; text-align: center; color: #fff; font-family: "Open Sans", sans-serif; font-size: 14px; line-height: 19px; }
```
